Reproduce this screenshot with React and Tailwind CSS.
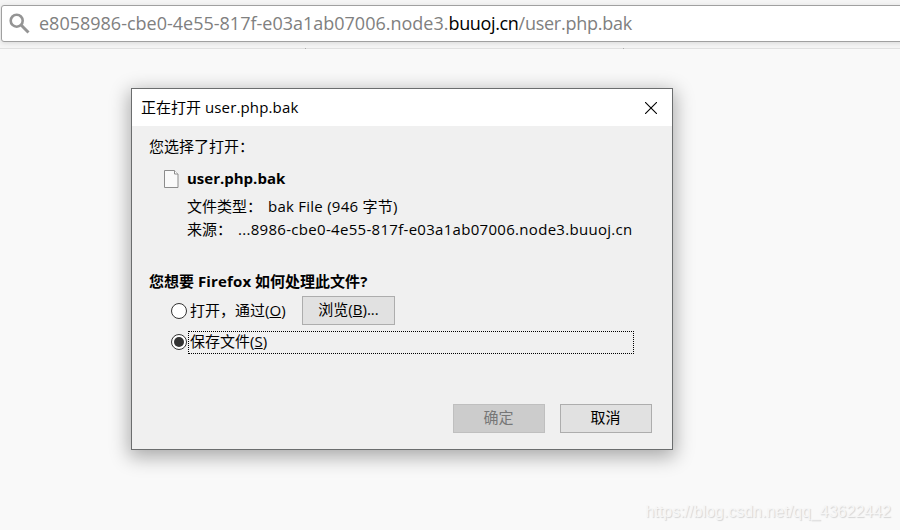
import React from 'react';

function SearchIcon() {
  return (
    <svg className="ml-[7px] h-[21px] w-[21px] shrink-0" viewBox="0 0 21 21" fill="none" stroke="#949494">
      <circle cx="7.7" cy="7.7" r="6" strokeWidth="2.6" />
      <path d="M12.3 12.3L19.5 19.5" strokeWidth="3" />
    </svg>
  );
}

function FileIcon() {
  return (
    <svg className="h-[18px] w-[15px] shrink-0" viewBox="0 0 15 18" fill="none">
      <path d="M0.5 0.5H10.5L14 4V17.5H0.5Z" fill="#fafafa" stroke="#8c8c8c" />
      <path d="M10.5 0.5V4H14" fill="#fff" stroke="#8c8c8c" />
    </svg>
  );
}

function Radio({ checked }) {
  return (
    <span className="flex size-4 shrink-0 items-center justify-center rounded-full border border-[#333] bg-white">
      {checked && <span className="size-2.5 rounded-full bg-[#333]" />}
    </span>
  );
}

export default function App() {
  return (
    <div className="flex h-[530px] w-[900px] flex-col overflow-hidden bg-[#f9f9f9] font-['Open_Sans','Noto_Sans_CJK_SC',sans-serif] text-[15px] text-black">
      <header className="flex h-[49px] shrink-0 flex-col bg-[#f5f5f5] pt-[5px]">
        <div className="ml-px flex h-[37px] w-[910px] shrink-0 items-center rounded-[3px] border border-[#a0a0a0] bg-white shadow-[0_1px_5px_rgba(0,0,0,0.12)]">
          <SearchIcon />
          <span className="ml-[9px] text-[18px] leading-[35px] whitespace-nowrap text-[#808080]">
            e8058986-cbe0-4e55-817f-e03a1ab07006.node3.<span className="tracking-[-0.35px] text-black">buuoj.cn</span><span className="tracking-[-0.25px]">/user.php.bak</span>
          </span>
        </div>
        <div className="mt-auto flex h-px bg-[#e0e0e0]">
          <span className="ml-[305px] w-px bg-[#aaa]" />
          <span className="ml-[317px] w-px bg-[#aaa]" />
        </div>
      </header>

      <section className="mt-[39px] ml-[131px] flex h-[362px] w-[542px] shrink-0 flex-col border border-[#6b6d6e] bg-[#f0f0f0] shadow-[0_5px_18px_2px_rgba(0,0,0,0.32)]">
        <div className="flex h-[37px] shrink-0 items-center justify-between bg-white pr-[15px] pl-[9px]">
          <span className="whitespace-nowrap">正在打开 <span className="tracking-[0.15px]">user.php.bak</span></span>
          <svg className="size-[12px]" viewBox="0 0 12 12" stroke="#000" strokeWidth="1.1">
            <path d="M0 0L12 12M12 0L0 12" />
          </svg>
        </div>

        <div className="flex flex-col pl-[17px] whitespace-nowrap">
          <div className="mt-[9px] h-[23px] leading-[23px]">您选择了打开：</div>
          <div className="mt-[9px] ml-[15px] flex h-6 items-center">
            <FileIcon />
            <span className="ml-2 leading-[22px] font-bold -mt-0.5">user.php.bak</span>
          </div>
          <div className="mt-1 ml-[38px] flex h-[23px] leading-[23px]">
            <span className="w-[81px]">文件类型：</span>
            <span className="tracking-[0.25px]">bak File (946 字节)</span>
          </div>
          <div className="ml-[38px] flex h-[23px] leading-[23px]">
            <span className="w-[51px]">来源：</span>
            <span className="tracking-[0.3px]">...8986-cbe0-4e55-817f-e03a1ab07006.node3.buuoj.cn</span>
          </div>
          <div className="mt-[29px] h-[23px] leading-[23px] font-bold">
            您想要 <span className="tracking-[0.15px]">Firefox</span> 如何处理此文件<span>?</span>
          </div>
          <div className="mt-[3px] ml-[22px] flex h-[29px] items-center">
            <Radio />
            <span className="ml-[3px] w-[112px]">打开，通过<span>(<u>O</u>)</span></span>
            <button className="h-[29px] w-[93px] border border-[#adadad] bg-[#e1e1e1] pb-0.5 leading-[25px]">浏览<span>(<u>B</u>)...</span></button>
          </div>
          <div className="mt-[6px] ml-[22px] flex h-[23px] items-start">
            <span className="mt-[3px]"><Radio checked /></span>
            <span className="ml-px h-[23px] w-[446px] border border-dotted border-black pl-px leading-[19px]">保存文件<span>(<u>S</u>)</span></span>
          </div>
        </div>

        <div className="mt-auto mb-4 flex justify-end gap-[15px] pr-5">
          <button className="h-[29px] w-[92px] border border-[#bfbfbf] bg-[#ccc] pr-px pb-[3px] leading-[24px] text-[#777]">确定</button>
          <button className="h-[29px] w-[92px] border border-[#adadad] bg-[#e1e1e1] pr-px pb-[3px] leading-[24px]">取消</button>
        </div>
      </section>

      <div className="mt-auto mb-[7px] self-end pr-[9px] font-['Liberation_Sans',sans-serif] text-[16px] leading-[22px] text-[#f6f6f6] [text-shadow:1px_1px_1px_#d4d4d4]">
        https://blog.csdn.net/qq_43622442
      </div>
    </div>
  );
}
